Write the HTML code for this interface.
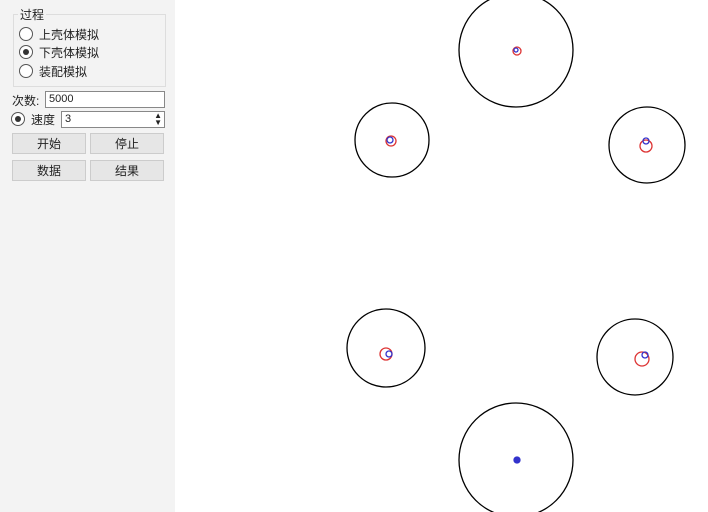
<!DOCTYPE html><html><head><meta charset="utf-8"><style>
body{margin:0;width:708px;height:512px;background:#fff;position:relative;overflow:hidden;font-family:"Liberation Sans","Noto Sans CJK SC",sans-serif;font-size:12px;color:#222}
.p{position:absolute;left:0;top:0;width:175px;height:512px;background:#f3f3f3}
.a{position:absolute}
.g{left:13px;top:14px;width:151px;height:71px;border:1px solid #ddd}
.r{width:12px;height:12px;border:1px solid #555;border-radius:50%;background:#fff}
.r.on::after{content:"";position:absolute;left:3px;top:3px;width:6px;height:6px;border-radius:50%;background:#333}
.in{background:#fff;border:1px solid #888;height:15px;font-size:11px;line-height:15px;padding-left:3px;box-sizing:border-box;height:17px}
.b{background:#e6e6e6;border:1px solid #ccc;height:21px;line-height:21px;text-align:center;width:74px;box-sizing:border-box}
</style></head><body>
<div class="p"></div>
<div class="a g"></div>
<div class="a" style="left:18px;top:6px;background:#f3f3f3;padding:0 2px">过程</div>
<div class="a r" style="left:19px;top:27px"></div><div class="a" style="left:39px;top:26px">上壳体模拟</div>
<div class="a r on" style="left:19px;top:45px"></div><div class="a" style="left:39px;top:44px">下壳体模拟</div>
<div class="a r on" style="display:none"></div>
<div class="a r" style="left:19px;top:64px"></div><div class="a" style="left:39px;top:63px">装配模拟</div>
<div class="a" style="left:12px;top:92px">次数:</div>
<div class="a in" style="left:45px;top:91px;width:120px">5000</div>
<div class="a r on" style="left:11px;top:112px"></div><div class="a" style="left:31px;top:111px">速度</div>
<div class="a in" style="left:61px;top:111px;width:104px">3<span style="position:absolute;right:2px;top:0;font-size:8px;line-height:7px">▲<br>▼</span></div>
<div class="a b" style="left:12px;top:133px">开始</div><div class="a b" style="left:90px;top:133px">停止</div>
<div class="a b" style="left:12px;top:160px">数据</div><div class="a b" style="left:90px;top:160px">结果</div>
<svg class="a" style="left:0;top:0" width="708" height="512">
<g fill="none" stroke="#000" stroke-width="1.3">
<circle cx="516" cy="50" r="57"/><circle cx="392" cy="140" r="37"/><circle cx="647" cy="145" r="38"/>
<circle cx="386" cy="348" r="39"/><circle cx="635" cy="357" r="38"/><circle cx="516" cy="460" r="57"/></g>
<g fill="none" stroke-width="1.3">
<circle cx="517" cy="51" r="4" stroke="#d33"/><circle cx="516" cy="50" r="2" stroke="#33c"/>
<circle cx="391" cy="141" r="5" stroke="#d33"/><circle cx="390" cy="140" r="3" stroke="#33c"/>
<circle cx="646" cy="146" r="6" stroke="#d33"/><circle cx="646" cy="141" r="3" stroke="#33c"/>
<circle cx="386" cy="354" r="6" stroke="#d33"/><circle cx="389" cy="354" r="3" stroke="#33c"/>
<circle cx="642" cy="359" r="7" stroke="#d33"/><circle cx="645" cy="355" r="3" stroke="#33c"/>
<circle cx="517" cy="460" r="3" stroke="#33c" fill="#33c"/></g>
</svg>
</body></html>
